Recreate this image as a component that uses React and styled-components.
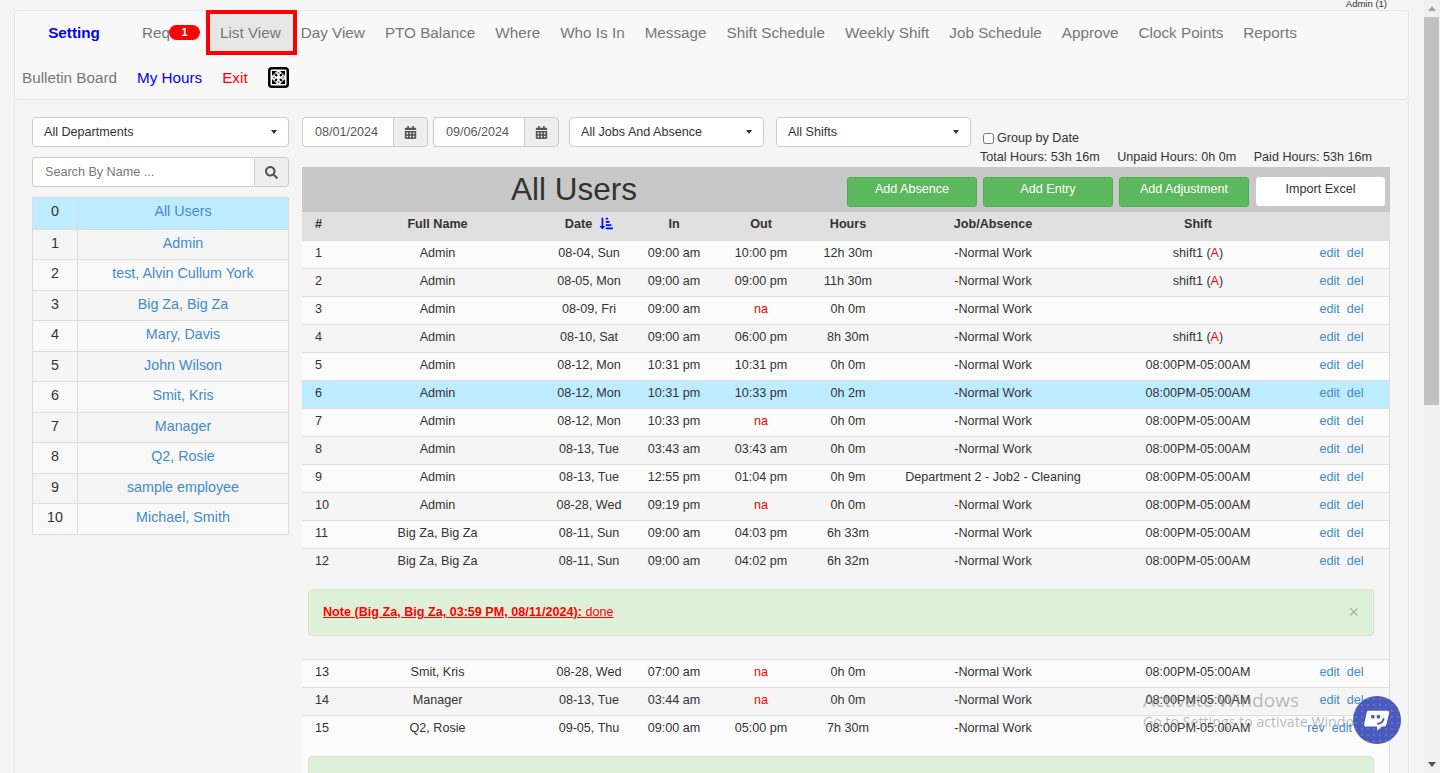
import React from 'react'
import styled, { createGlobalStyle } from 'styled-components'
import { FaCalendarAlt, FaSearch, FaSortAmountDownAlt } from 'react-icons/fa'

const GlobalStyle = createGlobalStyle`
  html, body { margin: 0; height: 100%; overflow: hidden; background: #f5f5f5; }
  body { font-family: "Liberation Sans", Arial, sans-serif; font-size: 12.6px; color: #333; }
  * { box-sizing: border-box; }
`

const users = ['All Users', 'Admin', 'test, Alvin Cullum York', 'Big Za, Big Za', 'Mary, Davis', 'John Wilson', 'Smit, Kris', 'Manager', 'Q2, Rosie', 'sample employee', 'Michael, Smith']

const navFirst = ['Day View', 'PTO Balance', 'Where', 'Who Is In', 'Message', 'Shift Schedule', 'Weekly Shift', 'Job Schedule', 'Approve', 'Clock Points', 'Reports']

const AbsenceMark = styled.span`
  color: #f00;
`

const NIGHT = '08:00PM-05:00AM'
const SHIFT1 = <>shift1 (<AbsenceMark>A</AbsenceMark>)</>

const records = [
  { n: 1, name: 'Admin', date: '08-04, Sun', in: '09:00 am', out: '10:00 pm', hours: '12h 30m', job: '-Normal Work', shift: SHIFT1 },
  { n: 2, name: 'Admin', date: '08-05, Mon', in: '09:00 am', out: '09:00 pm', hours: '11h 30m', job: '-Normal Work', shift: SHIFT1 },
  { n: 3, name: 'Admin', date: '08-09, Fri', in: '09:00 am', out: 'na', hours: '0h 0m', job: '-Normal Work', shift: '' },
  { n: 4, name: 'Admin', date: '08-10, Sat', in: '09:00 am', out: '06:00 pm', hours: '8h 30m', job: '-Normal Work', shift: SHIFT1 },
  { n: 5, name: 'Admin', date: '08-12, Mon', in: '10:31 pm', out: '10:31 pm', hours: '0h 0m', job: '-Normal Work', shift: NIGHT },
  { n: 6, name: 'Admin', date: '08-12, Mon', in: '10:31 pm', out: '10:33 pm', hours: '0h 2m', job: '-Normal Work', shift: NIGHT, active: true },
  { n: 7, name: 'Admin', date: '08-12, Mon', in: '10:33 pm', out: 'na', hours: '0h 0m', job: '-Normal Work', shift: NIGHT },
  { n: 8, name: 'Admin', date: '08-13, Tue', in: '03:43 am', out: '03:43 am', hours: '0h 0m', job: '-Normal Work', shift: NIGHT },
  { n: 9, name: 'Admin', date: '08-13, Tue', in: '12:55 pm', out: '01:04 pm', hours: '0h 9m', job: 'Department 2 - Job2 - Cleaning', shift: NIGHT },
  { n: 10, name: 'Admin', date: '08-28, Wed', in: '09:19 pm', out: 'na', hours: '0h 0m', job: '-Normal Work', shift: NIGHT },
  { n: 11, name: 'Big Za, Big Za', date: '08-11, Sun', in: '09:00 am', out: '04:03 pm', hours: '6h 33m', job: '-Normal Work', shift: NIGHT },
  { n: 12, name: 'Big Za, Big Za', date: '08-11, Sun', in: '09:00 am', out: '04:02 pm', hours: '6h 32m', job: '-Normal Work', shift: NIGHT, note: { who: 'Note (Big Za, Big Za, 03:59 PM, 08/11/2024):', text: ' done', close: true, pad: true } },
  { n: 13, name: 'Smit, Kris', date: '08-28, Wed', in: '07:00 am', out: 'na', hours: '0h 0m', job: '-Normal Work', shift: NIGHT },
  { n: 14, name: 'Manager', date: '08-13, Tue', in: '03:44 am', out: 'na', hours: '0h 0m', job: '-Normal Work', shift: NIGHT },
  { n: 15, name: 'Q2, Rosie', date: '09-05, Thu', in: '09:00 am', out: '05:00 pm', hours: '7h 30m', job: '-Normal Work', shift: NIGHT, rev: true, note: { who: 'Note (Q2, Rosie, 04:11 PM, 09/04/2024):', text: ' Forgot to clock in' } },
]

const COLS = '33px 205px 98px 72px 102px 72px 218px 192px 1fr'

const Page = styled.div`
  height: 773px;
  display: flex;
  overflow: hidden;
`
const Main = styled.div`
  flex: 1;
  min-width: 0;
  padding: 0 14px;
  position: relative;
`
const TopUser = styled.div`
  height: 10px;
  font-size: 9.5px;
  line-height: 8px;
  text-align: right;
  padding-right: 22px;
  color: #333;
`
const Navbar = styled.div`
  height: 90px;
  background: #f8f8f8;
  border: 1px solid #e7e7e7;
  border-radius: 4px;
`
const NavRow = styled.div`
  height: 45px;
  display: flex;
  align-items: center;
  margin-left: -3px;
  &:first-child { margin-top: -1px; }
`
const NavItem = styled.a`
  padding: ${p => (p.$selected ? '10px 12px 10px 10px' : '10px')};
  margin-right: ${p => (p.$selected ? '-2px' : 0)};
  font-size: 15.25px;
  line-height: 17px;
  white-space: nowrap;
  color: ${p => p.$color || '#777'};
  background: ${p => (p.$selected ? '#e7e7e7' : 'transparent')};
  outline: ${p => (p.$selected ? '4px solid #f00' : 'none')};
  display: flex;
  align-items: center;
`
const Brand = styled(NavItem)`
  width: 120px;
  padding-left: 14px;
  justify-content: center;
  font-weight: 700;
`
const Badge = styled.span`
  width: 31px;
  height: 15px;
  margin-left: -1px;
  border-radius: 8px;
  background: #f00;
  color: #fff;
  font-size: 11px;
  font-weight: 700;
  line-height: 15px;
  text-align: center;
`
const FullscreenIcon = styled.svg`
  width: 21px;
  height: 21px;
  margin-left: 10px;
`
const Body = styled.div`
  height: 673px;
  overflow: hidden;
  border-left: 1px solid #e7e7e7;
  border-right: 1px solid #e7e7e7;
  padding: 17px 18px 0 17px;
  display: flex;
  gap: 13px;
`
const Side = styled.div`
  width: 257px;
  flex: none;
  display: flex;
  flex-direction: column;
  gap: 10px;
`
const Select = styled.div`
  width: ${p => p.$width || '100%'};
  margin-right: ${p => p.$mr || 0};
  flex: none;
  height: 30px;
  background: #fff;
  border: 1px solid #ccc;
  border-radius: 4px;
  display: flex;
  align-items: center;
  justify-content: space-between;
  padding: 0 11px;
  color: #333;
  &::after {
    content: '';
    border-top: 4px solid #333;
    border-left: 3px solid transparent;
    border-right: 3px solid transparent;
  }
`
const InputGroup = styled.div`
  display: flex;
  height: 30px;
  width: ${p => p.$width || '100%'};
  flex: none;
  margin-right: ${p => p.$mr || 0};
`
const Input = styled.div`
  flex: 1;
  background: #fff;
  border: 1px solid #ccc;
  border-right: 0;
  border-radius: 4px 0 0 4px;
  padding: 0 12px;
  display: flex;
  align-items: center;
  color: ${p => (p.$muted ? '#777' : '#555')};
`
const Addon = styled.div`
  width: 35px;
  flex: none;
  background: #eee;
  border: 1px solid #ccc;
  border-radius: 0 4px 4px 0;
  display: flex;
  align-items: center;
  justify-content: center;
  color: #555;
`
const UserList = styled.div`
  border: 1px solid #ddd;
`
const UserRow = styled.div`
  display: grid;
  grid-template-columns: 45px 1fr;
  height: 30.55px;
  border-top: ${p => (p.$first ? 0 : '1px solid #ddd')};
  background: ${p => (p.$active ? '#bdebff' : p.$odd ? '#f5f5f5' : '#f9f9f9')};
  font-size: 14.3px;
  line-height: 27.4px;
  text-align: center;
`
const UserNum = styled.div`
  border-right: 1px solid #ddd;
  color: #333;
`
const UserName = styled.a`
  color: #428bca;
`
const Content = styled.div`
  flex: 1;
  min-width: 0;
`
const Filters = styled.div`
  display: flex;
  height: 49.5px;
`
const Stats = styled.div`
  color: #333;
  margin-left: -3px;
  white-space: nowrap;
`
const GroupLabel = styled.label`
  display: flex;
  align-items: center;
  height: 14px;
  margin: 14px 0 5px 3px;
  gap: 3px;
  input { margin: 0; width: 11px; height: 11px; }
`
const Totals = styled.div`
  display: flex;
  gap: 17.5px;
  line-height: 14px;
`
const TitleBar = styled.div`
  height: 45px;
  background: #c8c8c8;
  display: flex;
  padding-right: 5px;
`
const Title = styled.h1`
  flex: 1;
  margin: 0;
  padding-left: 5px;
  font-size: 31.5px;
  font-weight: 400;
  line-height: 45px;
  text-align: center;
  color: #333;
`
const Btn = styled.button`
  width: ${p => (p.$plain ? '129px' : '130px')};
  height: ${p => (p.$plain ? '29px' : '30px')};
  margin: ${p => (p.$plain ? '10px 0 0 7px' : '10px 0 0 6px')};
  padding: 0 0 5px;
  font: inherit;
  border-radius: 3px;
  border: 1px solid ${p => (p.$plain ? '#fff' : '#4cae4c')};
  background: ${p => (p.$plain ? '#fff' : '#5cb85c')};
  color: ${p => (p.$plain ? '#333' : '#fff')};
`
const Table = styled.div`
  border-right: 1px solid #ddd;
  box-shadow: inset 1px 0 0 #ddd;
`
const HeadRow = styled.div`
  display: grid;
  grid-template-columns: ${COLS};
  height: 29px;
  background: #e0e0e0;
  border-bottom: 1px solid #ddd;
  font-weight: 700;
  line-height: 25px;
`
const Cell = styled.div`
  text-align: ${p => (p.$left ? 'left' : 'center')};
  padding-left: ${p => (p.$left ? '13px' : 0)};
  color: ${p => (p.$danger ? '#f00' : 'inherit')};
  white-space: nowrap;
`
const SortIcon = styled(FaSortAmountDownAlt)`
  color: #00f;
  vertical-align: -2px;
  margin-left: 8px;
`
const Row = styled.div`
  display: grid;
  grid-template-columns: ${COLS};
  height: 28px;
  line-height: 24px;
  border-bottom: 1px solid ${p => (p.$open ? 'transparent' : '#ddd')};
  background: ${p => (p.$active ? '#bdebff' : p.$odd ? '#fbfbfb' : '#f5f5f5')};
`
const Actions = styled.div`
  display: flex;
  justify-content: center;
  gap: 7px;
  a { color: #428bca; }
`
const NoteRow = styled.div`
  background: ${p => (p.$odd ? '#fbfbfb' : '#f5f5f5')};
  padding: ${p => (p.$pad ? '12px 15px 23px 6px' : '12px 15px 0 6px')};
  border-bottom: 1px solid #ddd;
`
const Note = styled.div`
  height: 47px;
  background: #dff0d8;
  border: 1px solid #d6e9c6;
  border-radius: 4px;
  padding: 0 14px;
  display: flex;
  align-items: center;
  justify-content: space-between;
  color: #f00;
`
const NoteText = styled.span`
  text-decoration: underline;
`
const Close = styled.span`
  color: #a9b8a2;
  font-size: 18px;
  line-height: 18px;
`
const Watermark = styled.div`
  position: absolute;
  left: 1143px;
  top: 688px;
  color: rgba(120, 120, 120, 0.5);
  font-family: "Open Sans", "Liberation Sans", sans-serif;
  font-size: 14.2px;
  line-height: 21px;
  pointer-events: none;
  white-space: nowrap;
  b { display: block; font-size: 19px; font-weight: 400; line-height: 24px; margin-bottom: -1px; }
`
const ChatBubble = styled.div`
  position: absolute;
  left: 1353px;
  top: 696px;
  width: 48px;
  height: 48px;
  border-radius: 50%;
  background-color: #4a5bbd;
  background-image: radial-gradient(rgba(255,255,255,.22) 0.6px, transparent 0.9px);
  background-size: 6px 6px;
  display: flex;
  align-items: center;
  justify-content: center;
`
const Scrollbar = styled.div`
  width: 17px;
  flex: none;
  background: #f1f1f1;
  display: flex;
  flex-direction: column;
  align-items: center;
  justify-content: space-between;
  padding: 6px 0;
  position: relative;
`
const Thumb = styled.div`
  position: absolute;
  left: 1px;
  right: 1px;
  top: 17px;
  height: 388px;
  background: #c1c1c1;
`
const Arrow = styled.span`
  border-left: 4.5px solid transparent;
  border-right: 4.5px solid transparent;
  border-bottom: ${p => (p.$down ? 0 : '5px solid #a3a3a3')};
  border-top: ${p => (p.$down ? '5px solid #505050' : 0)};
`

const Fullscreen = () => (
  <FullscreenIcon viewBox="0 0 21 21">
    <rect x="1.25" y="1.25" width="18.5" height="18.5" rx="2.5" fill="#fff" stroke="#000" strokeWidth="2.5" />
    <path d="M4 4h5L4 9zM17 4v5L12 4zM4 17v-5L9 17zM17 17h-5l5-5z" fill="#000" />
    <path d="M7 7l2 2M14 7l-2 2M7 14l2-2M14 14l-2-2" stroke="#000" strokeWidth="2" />
    <path d="M10.5 4.5l1.5 2h-3zM10.5 16.5l-1.5-2h3zM4.5 10.5l2-1.5v3zM16.5 10.5l-2 1.5v-3z" fill="#555" />
  </FullscreenIcon>
)

const ChatIcon = () => (
  <svg width="30" height="28" viewBox="0 0 32 30">
    <path d="M7 5h20c1.6 0 2.4 1.2 2 2.8l-3 12c-.4 1.3-1.3 2.2-2.8 2.2H21l-5 4.5.3-4.5H4.5c-1.8 0-2.7-1.2-2.2-2.8L5 7c.3-1.2 1-2 2-2z" fill="#fff" />
    <circle cx="11.5" cy="11.5" r="2" fill="#4a5bbd" />
    <circle cx="17.5" cy="11.5" r="2" fill="#4a5bbd" />
    <path d="M17 19c3 0 5-1.5 6-5" stroke="#4a5bbd" strokeWidth="2" fill="none" strokeLinecap="round" />
  </svg>
)

const DateField = ({ value, mr }) => (
  <InputGroup $width="126px" $mr={mr}>
    <Input>{value}</Input>
    <Addon><FaCalendarAlt size={13} /></Addon>
  </InputGroup>
)

const RecordRow = ({ r }) => {
  const odd = r.n % 2 === 1
  return (
    <>
      <Row $odd={odd} $active={r.active} $open={!!r.note}>
        <Cell $left>{r.n}</Cell>
        <Cell>{r.name}</Cell>
        <Cell>{r.date}</Cell>
        <Cell>{r.in}</Cell>
        <Cell $danger={r.out === 'na'}>{r.out}</Cell>
        <Cell>{r.hours}</Cell>
        <Cell>{r.job}</Cell>
        <Cell>{r.shift}</Cell>
        <Actions>
          {r.rev && <a>rev</a>}
          <a>edit</a>
          <a>del</a>
        </Actions>
      </Row>
      {r.note && (
        <NoteRow $odd={odd} $pad={r.note.pad}>
          <Note>
            <NoteText><b>{r.note.who}</b>{r.note.text}</NoteText>
            {r.note.close && <Close>×</Close>}
          </Note>
        </NoteRow>
      )}
    </>
  )
}

export default function App() {
  return (
    <Page>
      <GlobalStyle />
      <Main>
        <TopUser>Admin (1)</TopUser>
        <Navbar>
          <NavRow>
            <Brand $color="#00f">Setting</Brand>
            <NavItem>Req<Badge>1</Badge></NavItem>
            <NavItem $selected>List View</NavItem>
            {navFirst.map(item => <NavItem key={item}>{item}</NavItem>)}
          </NavRow>
          <NavRow>
            <NavItem>Bulletin Board</NavItem>
            <NavItem $color="#00f">My Hours</NavItem>
            <NavItem $color="#f00">Exit</NavItem>
            <Fullscreen />
          </NavRow>
        </Navbar>
        <Body>
          <Side>
            <Select>All Departments</Select>
            <InputGroup>
              <Input $muted>Search By Name ...</Input>
              <Addon><FaSearch size={13} /></Addon>
            </InputGroup>
            <UserList>
              {users.map((u, i) => (
                <UserRow key={u} $first={i === 0} $active={i === 0} $odd={i % 2 === 1}>
                  <UserNum>{i}</UserNum>
                  <UserName>{u}</UserName>
                </UserRow>
              ))}
            </UserList>
          </Side>
          <Content>
            <Filters>
              <DateField value="08/01/2024" mr="5px" />
              <DateField value="09/06/2024" mr="10px" />
              <Select $width="195px" $mr="12px">All Jobs And Absence</Select>
              <Select $width="195px" $mr="12px">All Shifts</Select>
              <Stats>
                <GroupLabel><input type="checkbox" readOnly />Group by Date</GroupLabel>
                <Totals>
                  <span>Total Hours: 53h 16m</span>
                  <span>Unpaid Hours: 0h 0m</span>
                  <span>Paid Hours: 53h 16m</span>
                </Totals>
              </Stats>
            </Filters>
            <TitleBar>
              <Title>All Users</Title>
              <Btn>Add Absence</Btn>
              <Btn>Add Entry</Btn>
              <Btn>Add Adjustment</Btn>
              <Btn $plain>Import Excel</Btn>
            </TitleBar>
            <Table>
              <HeadRow>
                <Cell $left>#</Cell>
                <Cell>Full Name</Cell>
                <Cell>Date<SortIcon size={13} /></Cell>
                <Cell>In</Cell>
                <Cell>Out</Cell>
                <Cell>Hours</Cell>
                <Cell>Job/Absence</Cell>
                <Cell>Shift</Cell>
                <div />
              </HeadRow>
              {records.map(r => <RecordRow key={r.n} r={r} />)}
            </Table>
          </Content>
        </Body>
        <Watermark><b>Activate Windows</b>Go to Settings to activate Windows.</Watermark>
        <ChatBubble><ChatIcon /></ChatBubble>
      </Main>
      <Scrollbar>
        <Arrow />
        <Thumb />
        <Arrow $down />
      </Scrollbar>
    </Page>
  )
}
